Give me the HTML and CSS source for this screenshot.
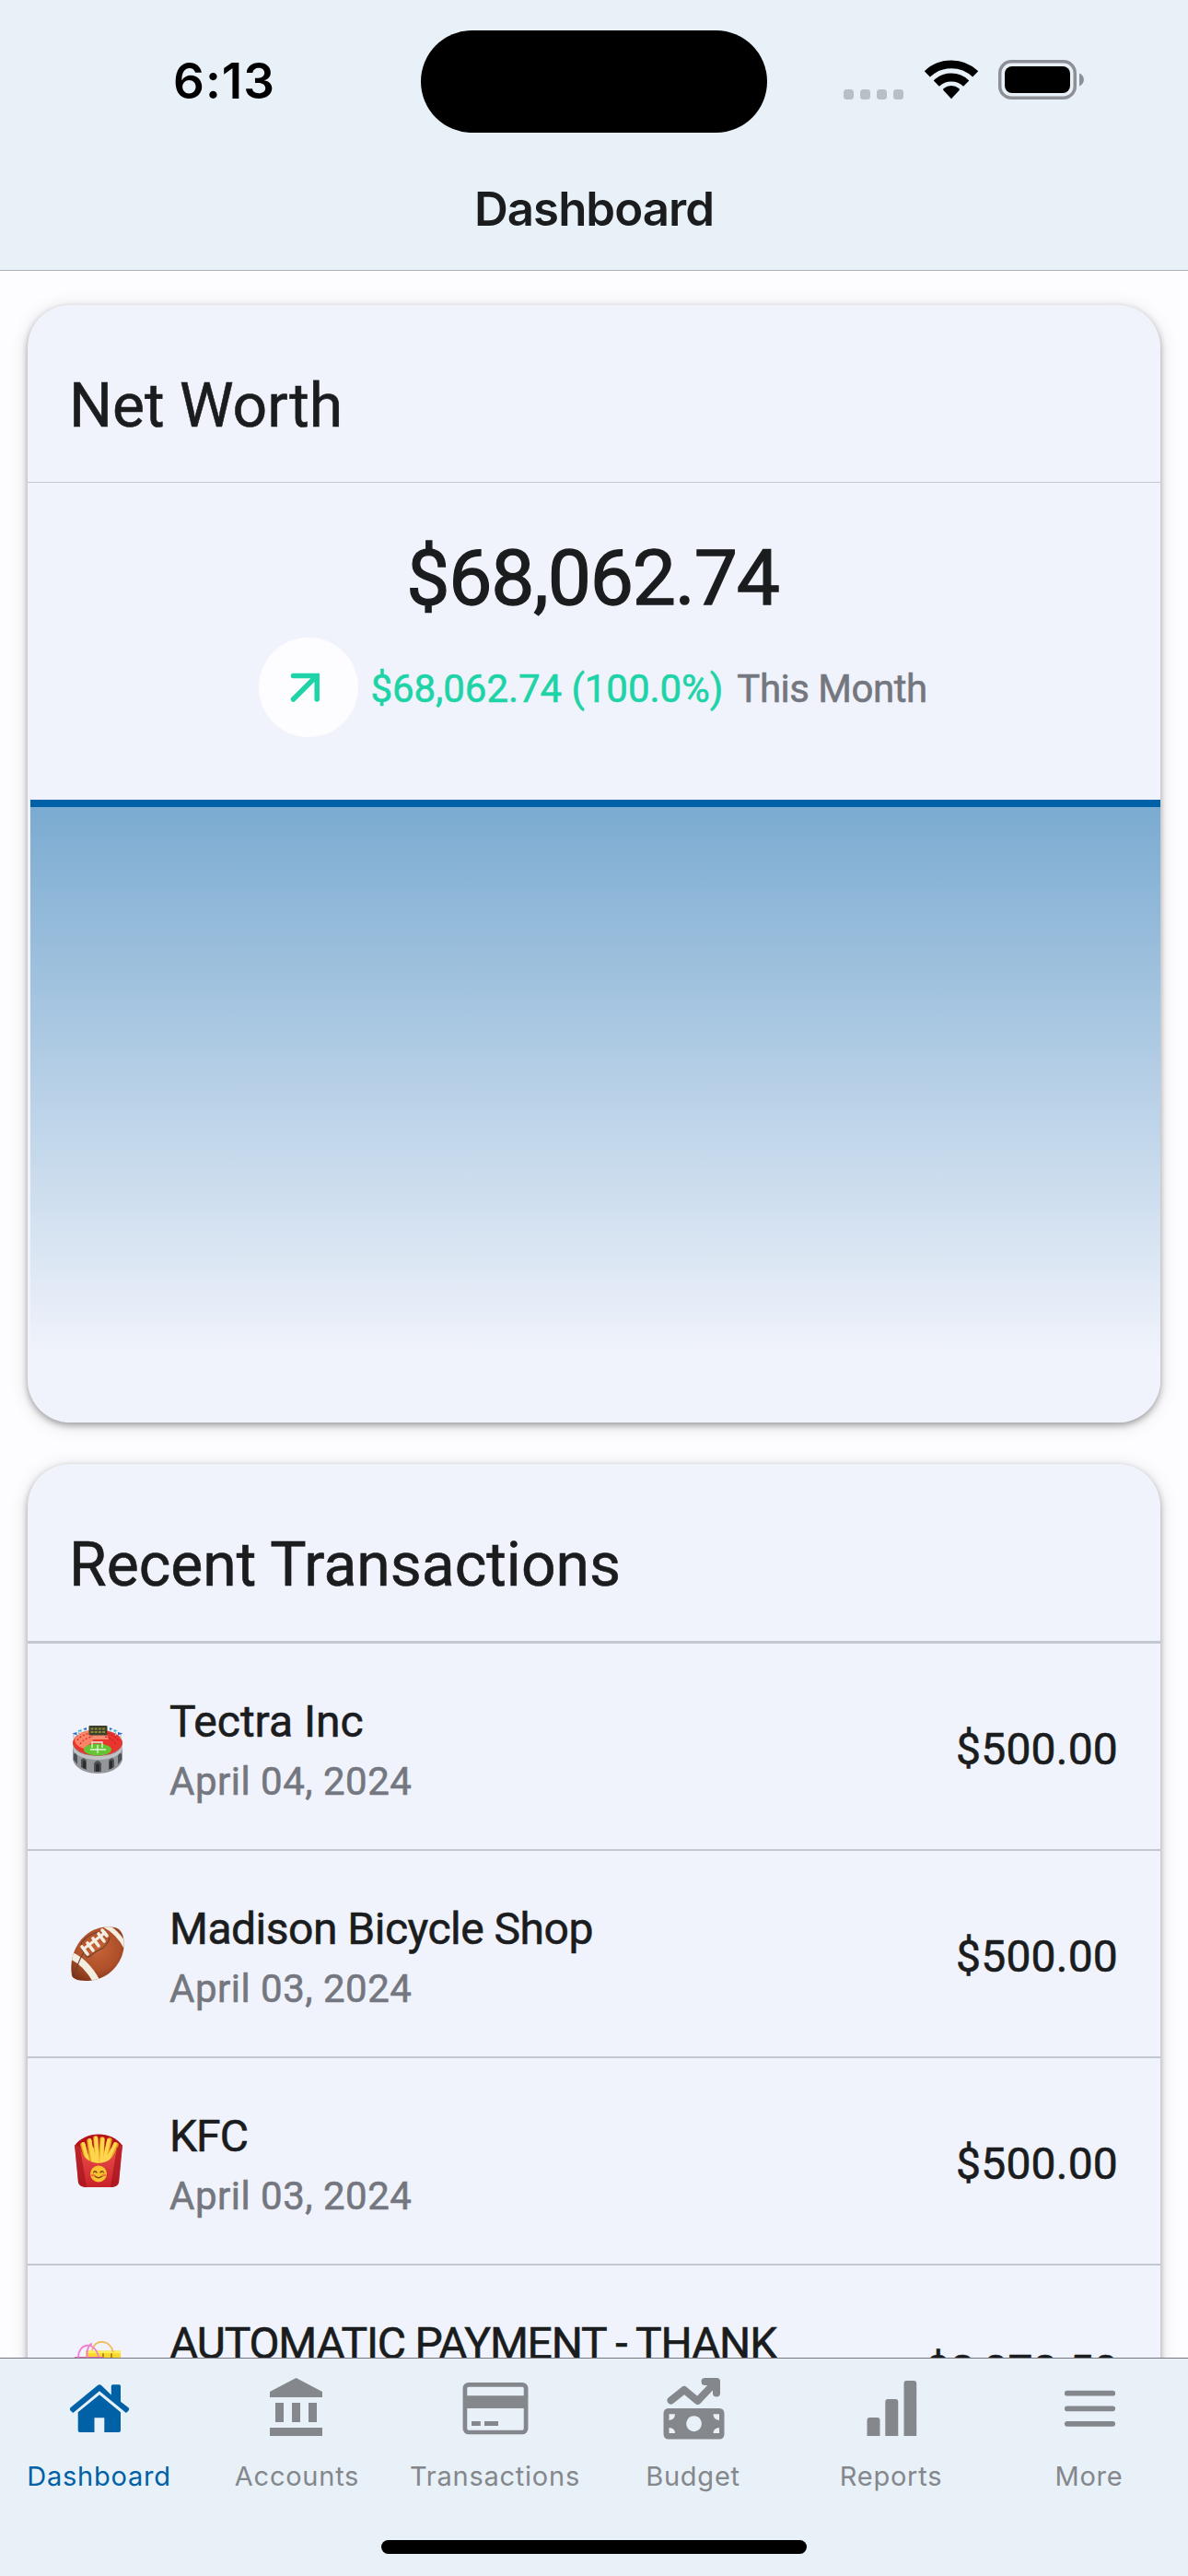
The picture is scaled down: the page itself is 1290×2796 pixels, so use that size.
FILE: index.html
```html
<!DOCTYPE html>
<html lang="en">
<head>
<meta charset="utf-8">
<title>Dashboard</title>
<link rel="stylesheet" href="styles.css">
</head>
<body>
<header class="header">
  <div class="status">
    <div class="status-side status-left"><span class="time">6:13</span></div>
    <div class="island"></div>
    <div class="status-side status-right">
      <div class="signal"><i></i><i></i><i></i><i></i></div>
      <svg class="wifi" viewBox="0 0 58 43" fill="none" stroke="#000" stroke-width="8.8">
        <path d="M2.8 15.4A37.7 37.7 0 0 1 55.2 15.4M12.8 25.6A23.2 23.2 0 0 1 45.2 25.6"/>
        <path d="M29 42.2L20.4 33.1A1.6 1.6 0 0 1 20.7 31A13 13 0 0 1 37.3 31A1.6 1.6 0 0 1 37.6 33.1Z" fill="#000" stroke="none"/>
      </svg>
      <svg class="battery" viewBox="0 0 94 43">
        <rect x="1.75" y="1.75" width="81.5" height="39.5" rx="12.5" fill="none" stroke="#8d9196" stroke-width="3.5"/>
        <rect x="7" y="7" width="71" height="29" rx="8" fill="#000"/>
        <path d="M88 14.5C94.500 17 94.500 26 88 28.500Z" fill="#8d9196"/>
      </svg>
    </div>
  </div>
  <h1 class="title">Dashboard</h1>
</header>

<main class="content">
  <section class="card">
    <h2 class="card-title">Net Worth</h2>
    <div class="worth">
      <div class="worth-total">$68,062.74</div>
      <div class="worth-change">
        <span class="trend">
          <svg viewBox="0 0 108 108" fill="none" stroke="#1dd3a7" stroke-width="5.500" stroke-linecap="round" stroke-linejoin="miter"><path d="M37.500 67L62.500 42M37.500 41.500H63.200V67"/></svg>
        </span>
        <span class="gain">$68,062.74 (100.0%)</span>
        <span class="period">This Month</span>
      </div>
    </div>
    <div class="chart"></div>
  </section>

  <section class="card">
    <h2 class="card-title card-title-list">Recent Transactions</h2>
    <ul class="list">
      <li class="row">
        <svg class="emoji" viewBox="0 0 60 60">
          <path d="M3 25V44C6 55 20 59 30 59S54 55 57 44V25Z" fill="#949699"/>
          <path d="M3 25C3 36 16 40 30 40S57 36 57 25V30C57 40 43 44 30 44S3 40 3 30Z" fill="#c0c2c4"/>
          <ellipse cx="30" cy="25.500" rx="27" ry="14" fill="#e8362f"/>
          <path d="M5 21Q10 13 22 12L25 24L15 32Q5 29 5 21Z" fill="#fb8467"/>
          <path d="M24 12H38L42 22H24Z" fill="#f58d72"/>
          <g stroke="#c61f2c" stroke-width="1.200" stroke-dasharray="2 2" fill="none"><path d="M8 23Q13 16 24 15M11 27Q16 20 25 19M37 14Q49 17 53 24M38 19Q47 21 50 28"/></g>
          <ellipse cx="30" cy="33" rx="15" ry="6.500" fill="#63c532"/>
          <path d="M24 31V25H35V31M30 28V37M22 33H39" fill="none" stroke="#e6f4de" stroke-width="1.300"/>
          <g fill="#4d5054"><path d="M4 44V38Q6 35 8 40V49ZM12 52V44Q15 40 18 45V55ZM26 57V48Q30 42 34 48V57ZM42 55V45Q45 40 48 44V52ZM52 49V40Q54 35 56 38V44Z"/></g>
          <g fill="#2b2c2e"><path d="M14 53V46Q15.500 43 17 47V54ZM28 57V50Q30 46 32 50V57ZM43 54V47Q45 43 46 46V53Z"/></g>
          <rect x="20.500" y="7" width="20" height="10.500" rx="1" fill="#3d3f2f"/>
          <path d="M22.500 10.500H38.500M22.500 14H38.500" stroke="#8b8a2e" stroke-width="2" stroke-dasharray="3 1.200"/>
          <path d="M4 15V21M9.500 12V18M16 10V14M44 10V14M49.500 12V18M55 15V21" stroke="#aeb6bd" stroke-width="1"/>
          <path d="M7.500 14L2.500 15.500L7.500 17.500ZM52 14L57.500 15.500L52 17.500ZM18 9L14 10.500L18 12ZM43 9L46.500 10.500L43 12Z" fill="#2d6fd0"/>
          <path d="M12.500 11L8 12.500L12.500 14ZM47.500 11L52 12.500L47.500 14Z" fill="#36bccb"/>
        </svg>
        <div class="info"><div class="name">Tectra Inc</div><div class="date">April 04, 2024</div></div>
        <div class="amount">$500.00</div>
      </li>
      <li class="row">
        <svg class="emoji" viewBox="0 0 60 60">
          <defs>
            <radialGradient id="ball" cx=".5" cy=".4" r=".65"><stop offset="0" stop-color="#c76338"/><stop offset=".6" stop-color="#ae5029"/><stop offset="1" stop-color="#7d3218"/></radialGradient>
            <clipPath id="ball-shape"><path d="M2 53C-1 35 6 17 20 7C33 -1 47 -1 53 3C60 9 60 23 56 33C49 49 36 58 20 59C11 59 3 58 2 53Z"/></clipPath>
          </defs>
          <g clip-path="url(#ball-shape)">
            <rect width="60" height="60" fill="url(#ball)"/>
            <path d="M0 31Q18 39 29 60" fill="none" stroke="#f3eee0" stroke-width="7.500"/>
            <path d="M38 -1Q52 6 61 23" fill="none" stroke="#f3eee0" stroke-width="5"/>
            <path d="M5 54Q8 39 15 28Q10 22 13 17Q20 8 31 6M17 30Q17 35 22 32Q29 26 35 24Q42 18 43 12" fill="none" stroke="#6b402f" stroke-width="1.200"/>
            <path d="M14 25L39 6" stroke="#f3eee0" stroke-width="3"/>
            <path d="M13 22L19 30M19 18L25 26M25 13L31 21M31 8L37 16M35 4L40 10" stroke="#f3eee0" stroke-width="3.600" stroke-linecap="round"/>
          </g>
        </svg>
        <div class="info"><div class="name name-mixed">Madison Bicycle Shop</div><div class="date">April 03, 2024</div></div>
        <div class="amount">$500.00</div>
      </li>
      <li class="row">
        <svg class="emoji" viewBox="0 0 60 60">
          <defs><linearGradient id="box" x2="0" y2="1"><stop stop-color="#f0524c"/><stop offset="1" stop-color="#c9222a"/></linearGradient></defs>
          <path d="M5 13C16 -3 45 -4 57 13L53 30H9Z" fill="#b5121b"/>
          <g stroke="#e3a01f" stroke-width="5.500" stroke-linecap="round"><path d="M14 12L19 30M21 8L24 32M28 5L30 33M35 6L34 33M43 7L37 33M50 12L41 31"/></g>
          <g stroke="#ffd54d" stroke-width="3.800" stroke-linecap="round"><path d="M14.500 11L19 28M21.500 7L25 30M28 4.500L30 31M35.500 6L34 31M42 7L37 31M49 11L41 29M24 16L27 30M46 17L39 31"/></g>
          <path d="M5 12L11 15Q15 31 31 32Q47 31 51 15L57 12L53 53Q52 57 46 58H16Q10 57 9 53Z" fill="url(#box)"/>
          <path d="M5 12L11 15L18 58H16Q10 57 9 53ZM57 12L51 15L44 58H46Q52 57 53 53Z" fill="#a5141d" opacity=".7"/>
          <circle cx="31" cy="43.500" r="9" fill="#fac233"/>
          <path d="M25.500 42Q27 39.500 29 42M33 42Q35 39.500 36.500 42M26.500 45.500Q31 50 35.500 45.500" fill="none" stroke="#7a4615" stroke-width="1.300" stroke-linecap="round"/>
          <path d="M24 45H26M36 45H38" stroke="#f07b35" stroke-width="2.500" stroke-linecap="round"/>
        </svg>
        <div class="info"><div class="name name-caps">KFC</div><div class="date">April 03, 2024</div></div>
        <div class="amount">$500.00</div>
      </li>
      <li class="row">
        <svg class="emoji" viewBox="0 0 60 60">
          <rect x="17" y="10.500" width="38" height="40" fill="#fbd92c"/>
          <path d="M36 11V50M45 11V50" stroke="#b9861c" stroke-width="2"/>
          <path d="M20 12H55" stroke="#fdee5c" stroke-width="2.500"/>
          <path d="M24 10C26 -2 43 -3 47 12" fill="none" stroke="#f5b752" stroke-width="1.800"/>
          <rect x="5" y="17" width="32" height="40" fill="#ee62b4"/>
          <path d="M9 18C9 2 27 -1 31 17M19 18C17 8 22 3 24 3" fill="none" stroke="#f07fd0" stroke-width="1.800"/>
        </svg>
        <div class="info"><div class="name name-long">AUTOMATIC PAYMENT - THANK</div></div>
        <div class="amount amount-long">$2,078.50</div>
      </li>
    </ul>
  </section>
</main>

<footer class="footer">
  <nav class="tabs">
    <a class="tab tab-active">
      <svg viewBox="0 0 72 72"><path d="M33.800 11.300Q36 9.300 38.200 11.300L48.800 21.500V12Q48.800 10.300 50.500 10.300H57.500Q59 10.300 59 12V28.700L67.500 35.300Q69 36.800 67.800 38.200L65 41L36 17.300L7.300 41L4.300 38.200Q3.200 36.800 4.500 35.300Z"/><path d="M36 21.300L59 40.300V60Q59 62 57 62H41.300V46.300H30.500V62H14.700Q12.700 62 12.700 60V40.300Z"/></svg>
      <span>Dashboard</span>
    </a>
    <a class="tab">
      <svg viewBox="0 0 24 24"><path d="M11.500 1L2 6V8H21V6M16 10V17H19V10M2 22H21V19H2M10 10V17H13V10M4 10V17H7V10Z"/></svg>
      <span>Accounts</span>
    </a>
    <a class="tab">
      <svg viewBox="0 0 72 72"><rect x="2.900" y="10.300" width="66.200" height="51.700" rx="4" fill="none" stroke="currentColor" stroke-width="4.700"/><path d="M1 22.300H71V36H1ZM10 50H19.800V55H10ZM24 50H39V55H24Z"/></svg>
      <span>Transactions</span>
    </a>
    <a class="tab">
      <svg viewBox="0 0 72 72"><g fill="none" stroke="currentColor" stroke-width="8" stroke-linecap="round" stroke-linejoin="round"><path d="M11.500 27.500L26 16L40.500 28L58.500 9M48.500 7H61V19.500"/></g><path fill-rule="evenodd" d="M9 36H64Q69.500 36 69.500 42V63.500Q69.500 69.500 64 69.500H9Q3.500 69.500 3.500 63.500V42Q3.500 36 9 36ZM36.500 44.200A8.300 8.500 0 1 0 36.600 44.200ZM9.500 42.300V49Q16 48.500 16 42.300ZM9.500 63V57Q16 57.500 16 63ZM64 42.300V49Q57.500 48.500 57.500 42.300ZM64 63V57Q57.500 57.500 57.500 63Z"/></svg>
      <span>Budget</span>
    </a>
    <a class="tab">
      <svg viewBox="0 0 72 72"><path d="M9.500 66V49Q9.500 46 12.500 46H20.500Q23.500 46 23.500 49V66ZM29.300 66V29Q29.300 26 32.300 26H40.300Q43.300 26 43.300 29V66ZM49.500 66V9Q49.500 6 52.500 6H60.200Q63.200 6 63.200 9V66Z"/></svg>
      <span>Reports</span>
    </a>
    <a class="tab">
      <svg viewBox="0 0 72 72"><path d="M11.800 19.700H61.200M11.800 36.300H61.200M11.800 52.800H61.200" fill="none" stroke="currentColor" stroke-width="5.700" stroke-linecap="round"/></svg>
      <span>More</span>
    </a>
  </nav>
  <div class="home-bar"></div>
</footer>
</body>
</html>
```
FILE: styles.css
```css
* { box-sizing: border-box; }

body {
  margin: 0;
  width: 1290px;
  height: 2796px;
  overflow: hidden;
  display: flex;
  flex-direction: column;
  background: #fdfdff;
  color: #1a1c1e;
  font-family: Roboto, sans-serif;
}

h1, h2, ul { margin: 0; padding: 0; font-weight: 400; }

.header {
  flex: none;
  height: 294px;
  background: #e8f0f8;
  border-bottom: 1px solid #acb1b8;
  font-family: Inter, sans-serif;
  font-weight: 600;
}

.status { display: flex; align-items: center; height: 177px; }
.status-side { flex: none; width: 457px; display: flex; align-items: center; }
.status-left { padding: 0 0 1px 188px; }
.status-right { padding: 0 0 4px 83px; }
.time { font-size: 53px; line-height: 64px; letter-spacing: 1px; color: #000; }
.island { width: 376px; height: 111px; border-radius: 56px; background: #000; }

.signal { display: flex; gap: 7px; margin: 31px 22px 0 0; }
.signal i { width: 11px; height: 11px; border-radius: 3.5px; background: #b9bfc7; }
.wifi { width: 58px; height: 43px; margin-left: 1px; }
.battery { width: 94px; height: 43px; margin-left: 22px; }
.signal, .wifi, .battery { flex: none; }

.title {
  padding-top: 20px;
  font-size: 51px;
  line-height: 60px;
  font-weight: 600;
  letter-spacing: -1px;
  text-align: center;
}

.content {
  flex: 1;
  min-height: 0;
  overflow: hidden;
  display: flex;
  flex-direction: column;
  gap: 45px;
  padding: 37px 30px 0;
  -webkit-text-stroke-width: 0.6px;
}

.card {
  flex: none;
  border-radius: 46px;
  background: #f0f3fb;
  box-shadow: 0 3px 7px rgba(0, 0, 0, 0.32), 0 3px 20px rgba(0, 0, 0, 0.13);
}

.card-title {
  height: 193px;
  padding: 70px 45px 0;
  border-bottom: 1px solid #c3c7cf;
  font-size: 66px;
  line-height: 80px;
}

.card-title-list { height: 195px; border-bottom-width: 3px; }

.worth {
  height: 344px;
  padding-top: 54px;
  display: flex;
  flex-direction: column;
  align-items: center;
}

.worth-total {
  padding-right: 3px;
  font-size: 84px;
  line-height: 100px;
  letter-spacing: -1.2px;
  -webkit-text-stroke-width: 1.3px;
}

.worth-change {
  display: flex;
  align-items: center;
  margin: 14px 2px 0 0;
  font-size: 42px;
  line-height: 50px;
}

.trend { width: 108px; height: 108px; border-radius: 50%; background: #fdfdff; }
.trend svg { display: block; }
.gain { margin: 3px 15px 0 13px; color: #1dd3a7; letter-spacing: -0.05px; }
.period { margin-top: 3px; color: #74777f; letter-spacing: -0.5px; }

.chart {
  height: 676px;
  margin-left: 3px;
  border-top: 8px solid #0061a6;
  background: linear-gradient(#7babd1, #f0f3fb 594px);
  border-radius: 0 0 46px 46px;
}

.list { list-style: none; }

.row {
  display: flex;
  align-items: center;
  height: 225px;
  padding: 6px 46px 0;
  border-bottom: 2px solid #c3c7cf;
}

.emoji { flex: none; width: 60px; height: 60px; margin: -6px 48px 0 0; overflow: visible; }
.info { flex: 1; min-height: 130px; white-space: nowrap; padding-top: 2px; }
.name { font-size: 48px; line-height: 66px; }
.name-mixed { letter-spacing: -0.5px; }
.name-caps { letter-spacing: -1px; }
.name-long { letter-spacing: -1.2px; }
.date { margin-top: 2px; font-size: 42px; line-height: 60px; letter-spacing: 0.5px; color: #74777f; }
.amount { font-size: 48px; line-height: 60px; letter-spacing: 0.2px; }
.amount-long { letter-spacing: -0.2px; }

.footer {
  flex: none;
  height: 237px;
  border-top: 1px solid #74777f;
  background: #e8f0f8;
}

.tabs { display: flex; padding-top: 18px; font-family: Inter, sans-serif; }

.tab {
  flex: 1;
  display: flex;
  flex-direction: column;
  align-items: center;
  gap: 20px;
  color: #84878b;
  font-size: 29px;
  line-height: 36px;
  letter-spacing: 0.75px;
}

.tab svg { width: 72px; height: 72px; fill: currentColor; }
.tab-active { color: #0061a6; }

.home-bar {
  width: 462px;
  height: 15px;
  margin: 51px auto 0;
  border-radius: 8px;
  background: #000;
}
```
